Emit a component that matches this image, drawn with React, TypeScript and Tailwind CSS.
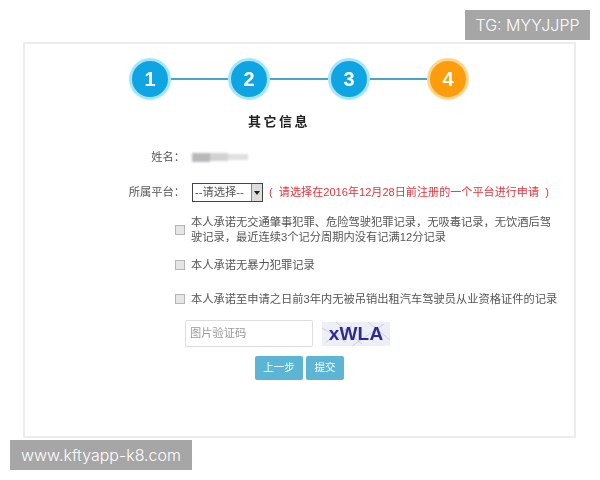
import React from "react";

const cjk = "font-['Liberation_Sans','Noto_Sans_CJK_SC',sans-serif]";

function Step({ n, orange }: { n: number; orange?: boolean }) {
  return (
    <div
      className={
        "flex h-[42px] w-[42px] shrink-0 items-center justify-center rounded-full border-[3px] text-[20px] font-bold text-white " +
        (orange ? "border-[#fcd58f] bg-[#fb9d0c]" : "border-[#a5e6fb] bg-[#0ea5e2]")
      }
    >
      {n}
    </div>
  );
}

function Line({ wide }: { wide?: boolean }) {
  return <div className={"h-[2px] bg-[#4aa3c8] " + (wide ? "w-[58px]" : "w-[57px]")} />;
}

function Check({ children, className = "" }: { children: React.ReactNode; className?: string }) {
  return (
    <div className={"flex items-center " + className}>
      <div className="h-[10px] w-[10px] shrink-0 border border-[#b5b5b5] bg-[#e6e6e6]" />
      <div className="ml-[6px] text-[11.25px] leading-[14.5px] text-[#555]">{children}</div>
    </div>
  );
}

export default function App() {
  return (
    <div className={"relative h-[480px] w-[600px] overflow-hidden bg-white " + cjk}>
      <div className="ml-[23px] mt-[42px] h-[396px] w-[553px] border-2 border-[#ececec] bg-white pt-[14px] blur-[0.5px]">
        <div className="ml-[104px] flex items-center">
          <Step n={1} />
          <Line />
          <Step n={2} />
          <Line wide />
          <Step n={3} />
          <Line />
          <Step n={4} orange />
        </div>

        <div className="mt-[14px] ml-[223px] text-[13px] font-bold leading-[16px] tracking-[2.5px] text-[#222]">其它信息</div>

        <div className="mt-[19px] flex h-[16px] items-center">
          <div className="w-[160px] text-right text-[11.25px] text-[#555]">姓名：</div>
          <div className="ml-[7px] flex items-center blur-[1px]">
            <div className="h-[9px] w-[18px] bg-[#b8b8bc]" />
            <div className="h-[8px] w-[18px] bg-[#d2d2d4]" />
            <div className="h-[6px] w-[20px] bg-[#e0e0e2]" />
          </div>
        </div>

        <div className="mt-[18px] flex h-[19px] items-center">
          <div className="w-[160px] text-right text-[11.25px] text-[#555]">所属平台：</div>
          <div className="ml-[7px] flex h-[19px] w-[71px] items-center border border-[#444] bg-white">
            <div className="flex-1 pl-[2px] text-[11.25px] text-[#555]">--请选择--</div>
            <div className="flex h-full w-[11px] items-center justify-center border-l border-[#888] bg-[#ddd]">
              <div className="h-0 w-0 border-x-[3px] border-t-[4px] border-x-transparent border-t-[#222]" />
            </div>
          </div>
          <div className="ml-[6px] text-[11.1px] text-[#e8323c]">(&nbsp; 请选择在2016年12月28日前注册的一个平台进行申请 &nbsp;)</div>
        </div>

        <Check className="ml-[150px] mt-[13px]">
          本人承诺无交通肇事犯罪、危险驾驶犯罪记录，无吸毒记录，无饮酒后驾
          <br />
          驶记录，最近连续3个记分周期内没有记满12分记录
        </Check>
        <Check className="ml-[150px] mt-[14px]">本人承诺无暴力犯罪记录</Check>
        <Check className="ml-[150px] mt-[19px]">本人承诺至申请之日前3年内无被吊销出租汽车驾驶员从业资格证件的记录</Check>

        <div className="ml-[160px] mt-[14px] flex items-center">
          <div className="flex h-[27px] w-[128px] items-center rounded-[2px] border border-[#ddd] pl-[4px] text-[11.25px] text-[#999]">
            图片验证码
          </div>
          <div className="relative ml-[9px] flex h-[24px] w-[68px] items-center justify-center overflow-hidden bg-[#eeeef6]">
            <svg className="absolute inset-0" width="68" height="24" viewBox="0 0 68 24" fill="none" stroke="#b9b9d6" strokeWidth="0.6">
              <path d="M0 6 L24 20 M14 0 L40 22 M30 24 L62 2 M46 0 L68 18 M4 20 L30 4" />
            </svg>
            <span className="relative text-[19px] font-bold leading-none tracking-[0.2px] text-[#2d2a94]">xWLA</span>
          </div>
        </div>

        <div className="ml-[230px] mt-[9px] flex gap-[3px]">
          <div className="flex h-[24px] w-[48px] items-center justify-center rounded-[2px] bg-[#5cb5d5] text-[10.5px] text-white">上一步</div>
          <div className="flex h-[24px] w-[38px] items-center justify-center rounded-[2px] bg-[#5cb5d5] text-[10.5px] text-white">提交</div>
        </div>
      </div>

      <div className="absolute left-[465px] top-[10px] flex h-[30px] w-[125px] items-center justify-center bg-[#a6a6a6] font-['Inter',sans-serif] text-[16px] font-light text-white">
        TG: MYYJJPP
      </div>
      <div className="absolute left-[10px] top-[440px] flex h-[30px] w-[182px] items-center justify-center bg-[#a6a6a6] font-['Inter',sans-serif] text-[16px] font-light text-white">
        www.kftyapp-k8.com
      </div>
    </div>
  );
}
